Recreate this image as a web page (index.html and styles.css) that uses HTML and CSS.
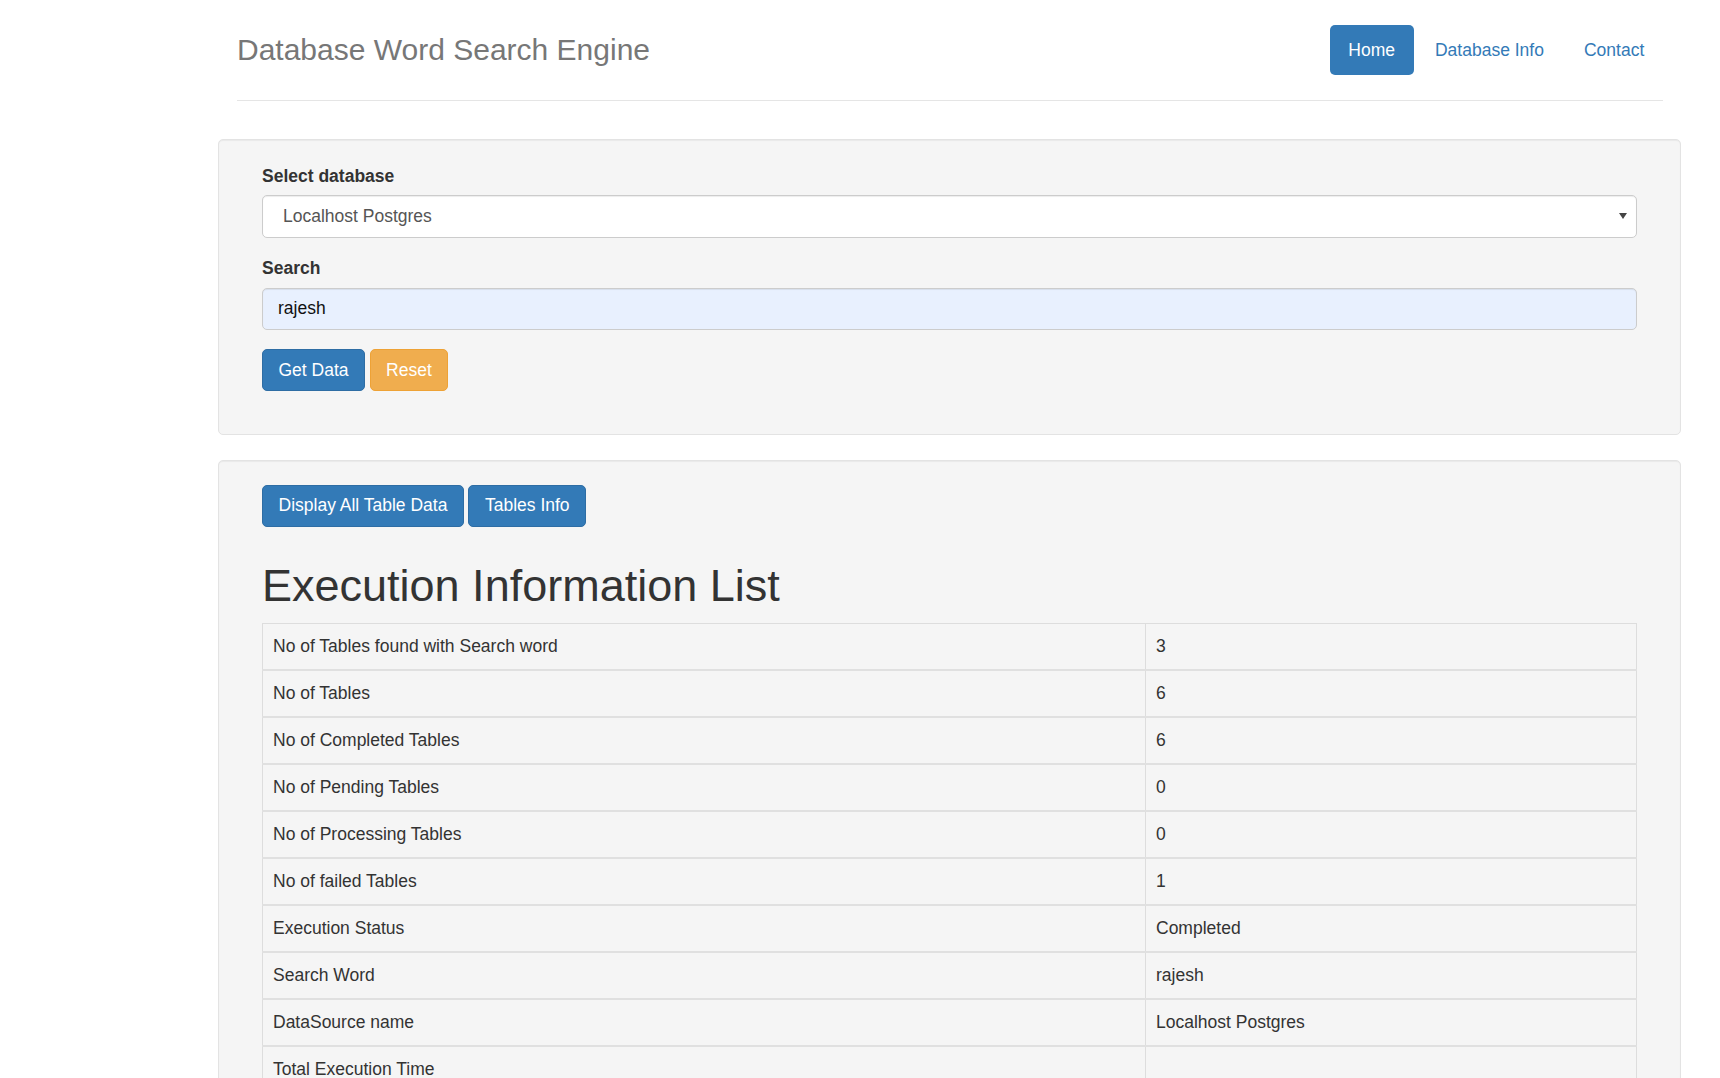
FILE: index.html
```html
<!DOCTYPE html>
<html lang="en">
<head>
<meta charset="utf-8">
<title>Database Word Search Engine</title>
<link rel="stylesheet" href="styles.css">
</head>
<body>
<div class="page">
  <header class="header">
    <h3 class="brand">Database Word Search Engine</h3>
    <nav class="nav">
      <a class="nav-link active" href="#">Home</a>
      <a class="nav-link" href="#">Database Info</a>
      <a class="nav-link" href="#">Contact</a>
    </nav>
  </header>

  <section class="well">
    <div class="form-group">
      <label class="label" for="db">Select database</label>
      <div class="select-wrap">
        <select id="db" class="form-control select">
          <option>Localhost Postgres</option>
        </select>
        <svg class="select-arrow" width="8" height="6" viewBox="0 0 8 6"><path d="M0 0H8L4 6Z" fill="#444"/></svg>
      </div>
    </div>
    <div class="form-group">
      <label class="label" for="q">Search</label>
      <input id="q" class="form-control input" type="text" value="rajesh">
    </div>
    <div class="btn-row">
      <button class="btn btn-primary">Get Data</button>
      <button class="btn btn-warning">Reset</button>
    </div>
  </section>

  <section class="well well-results">
    <div class="btn-row-plain">
      <button class="btn btn-primary">Display All Table Data</button>
      <button class="btn btn-primary">Tables Info</button>
    </div>
    <h1 class="title">Execution Information List</h1>
    <table class="table">
      <tbody>
        <tr><td class="c1">No of Tables found with Search word</td><td>3</td></tr>
        <tr><td class="c1">No of Tables</td><td>6</td></tr>
        <tr><td class="c1">No of Completed Tables</td><td>6</td></tr>
        <tr><td class="c1">No of Pending Tables</td><td>0</td></tr>
        <tr><td class="c1">No of Processing Tables</td><td>0</td></tr>
        <tr><td class="c1">No of failed Tables</td><td>1</td></tr>
        <tr><td class="c1">Execution Status</td><td>Completed</td></tr>
        <tr><td class="c1">Search Word</td><td>rajesh</td></tr>
        <tr><td class="c1">DataSource name</td><td>Localhost Postgres</td></tr>
        <tr><td class="c1">Total Execution Time</td><td></td></tr>
      </tbody>
    </table>
  </section>
</div>
</body>
</html>
```

FILE: styles.css
```css
html, body {
  margin: 0;
  padding: 0;
  background: #fff;
}
body {
  font-family: "Liberation Sans", Arial, sans-serif;
  font-size: 17.5px;
  line-height: 25px;
  color: #333;
}
.page {
  width: 1463px;
  margin-left: 218px;
}
.header {
  display: flex;
  align-items: center;
  justify-content: space-between;
  margin: 0 18px 0 19px;
  padding: 25px 0 25px;
  border-bottom: 1px solid #e5e5e5;
}
.brand {
  margin: 0 0 2px;
  font-size: 30px;
  line-height: 33px;
  font-weight: normal;
  color: #777;
}
.nav {
  display: flex;
  gap: 2.5px;
}
.nav-link {
  display: block;
  padding: 12.5px 18.75px;
  border-radius: 5px;
  color: #337ab7;
  text-decoration: none;
  font-size: 17.5px;
  line-height: 25px;
}
.nav-link.active {
  background: #337ab7;
  color: #fff;
}
.well {
  background: #f5f5f5;
  border: 1px solid #e3e3e3;
  border-radius: 5px;
  box-shadow: inset 0 1px 1px rgba(0,0,0,0.05);
  padding: 23.75px 43px;
  margin-top: 38px;
}
.well-results {
  margin-top: 25px;
  padding-bottom: 40px;
}
.form-group {
  margin-bottom: 18.75px;
}
.label {
  display: block;
  font-weight: bold;
  margin-bottom: 6.25px;
  line-height: 25px;
}
.form-control {
  display: block;
  box-sizing: border-box;
  width: 100%;
  height: 42.5px;
  margin: 0;
  font-family: "Liberation Sans", Arial, sans-serif;
  font-size: 17.5px;
  line-height: 25px;
  color: #555;
  border: 1px solid #ccc;
  border-radius: 5px;
  box-shadow: inset 0 1px 1px rgba(0,0,0,0.075);
  outline: none;
}
.select-wrap {
  position: relative;
}
.select {
  appearance: none;
  -webkit-appearance: none;
  background: #fff;
  padding: 0 30px 0 20px;
}
.select-arrow {
  position: absolute;
  right: 10px;
  top: 18px;
}
.input {
  background: #e8f0fe;
  color: #111;
  padding: 0 15px;
}
.btn-row {
  display: flex;
  gap: 4.5px;
  margin-bottom: 18.75px;
}
.btn-row-plain {
  display: flex;
  gap: 4.5px;
}
.btn {
  box-sizing: border-box;
  height: 42.5px;
  padding: 0 15.5px;
  font-family: "Liberation Sans", Arial, sans-serif;
  font-size: 17.5px;
  line-height: 25px;
  color: #fff;
  border: 1px solid transparent;
  border-radius: 5px;
  cursor: pointer;
}
.btn-primary {
  background: #337ab7;
  border-color: #2e6da4;
}
.btn-warning {
  background: #f0ad4e;
  border-color: #eea236;
}
.title {
  margin: 34px 0 12px;
  font-size: 45px;
  line-height: 49.5px;
  font-weight: normal;
  color: #333;
}
.table {
  width: 100%;
  border-collapse: collapse;
  border: 1px solid #ddd;
}
.table td {
  border: 1px solid #ddd;
  padding: 10px 10px;
  line-height: 25px;
  vertical-align: top;
  color: #333;
}
.table tr + tr td {
  border-top: 2px solid #e0e0e0;
}
.table td.c1 {
  width: 862px;
}
```
